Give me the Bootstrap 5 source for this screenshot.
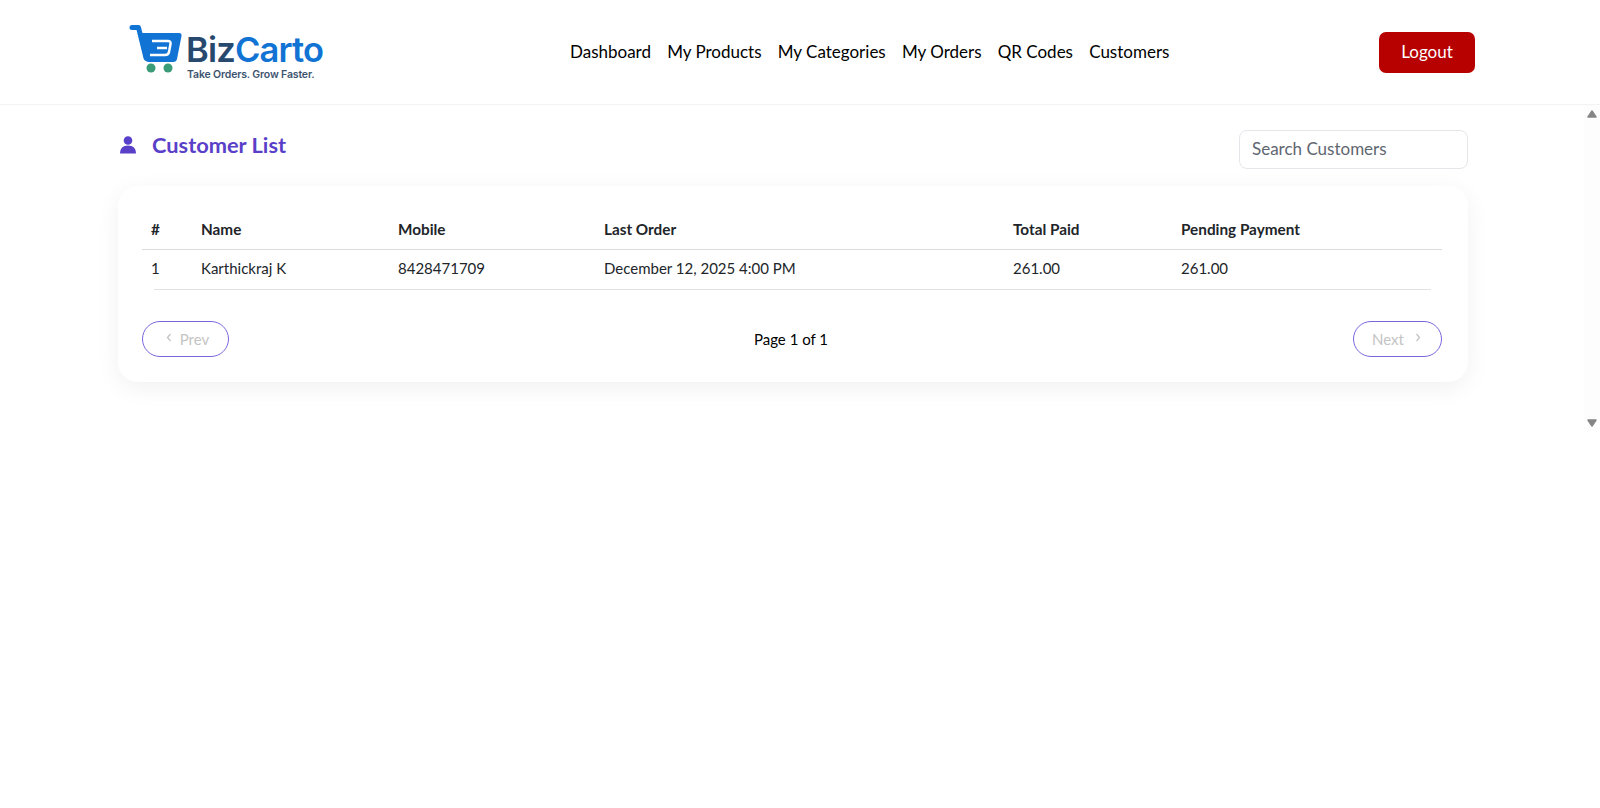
<!doctype html>
<html lang="en"><head><meta charset="utf-8">
<title>Customer List</title>
<link href="https://cdn.jsdelivr.net/npm/bootstrap@5.3.0/dist/css/bootstrap.min.css" rel="stylesheet">
<style>
html,body{height:100%;overflow:hidden}
body{font-family:Lato,"Noto Sans",sans-serif;color:#000;background:#fff}
.topbar{height:105px;border-bottom:1px solid #f3f3f3;padding:0 125px 0 128px}
.brand-box{width:212px;height:70px}
.brand-mark{margin-top:7px}
.brand-copy{margin:16px 0 0 2px}
.brand-name{font-family:Inter,sans-serif;font-weight:600;font-size:34.500px;line-height:33px;letter-spacing:-.8px;color:#27496d}
.brand-name span{color:#1174d4}
.brand-tag{font-family:Inter,sans-serif;font-size:10.500px;font-weight:600;line-height:12px;margin:3px 0 0 1px;color:#3d5470;letter-spacing:-.15px}
.menu-link{font-size:17px;color:#000;text-decoration:none}
.menu-row{gap:16.200px;margin-left:230px}
.btn-logout{background:#b70000;color:#fff;border:0;border-radius:7px;width:96px;height:41px;font-size:17px;padding:0}
.scroll-area{height:327px;padding:0 118px;position:relative}
.scroll-track{position:absolute;right:0;top:0;bottom:0;width:16px;background:#fdfdfd}
.scroll-arrow{position:absolute;left:3px;width:10px;height:8px}
.arrow-top{top:5px}
.arrow-bottom{bottom:5px}
.head-row{width:1350px;padding-top:25px;height:81px}
.page-title{font-size:21.800px;font-weight:700;color:#5a3fc8;margin:0;line-height:30px}
.title-wrap{padding-left:1px;gap:15px}
.search-box{width:229px;height:39px;border:1px solid #e4e6ea;border-radius:8px;font-size:17px;padding:0 12px 2px}
.search-box::placeholder{color:#5f6670;opacity:1}
.list-card{width:1350px;height:196px;background:#fff;border-radius:20px;box-shadow:0 6px 24px rgba(0,0,0,.06);padding:25px 26px 25px 24px}
.cust-table{width:100%;margin:0;font-size:15px;table-layout:fixed;--bs-table-bg:transparent}
.cust-table th{font-weight:700;font-size:15.300px;padding:0 8px 0 9px;height:38px;border-bottom:1px solid #dcdcdc;vertical-align:middle}
.cust-table td{padding:0 8px 2px 9px;height:40px;border:0;vertical-align:middle}
.row-rule{height:1px;background:#e2e2e2;margin:0 11px 0 12px}
.pager-row{margin-top:31px}
.pager-text{font-size:15px}
.pager-btn{height:36px;border:1px solid #7c64dd;border-radius:18px;background:#fff;color:#c4c4c4;font-size:15px;opacity:1}
.pager-prev{width:87px;padding:0 0 0 4px;gap:8px}
.pager-next{width:89px;padding:0 2px 0 0;gap:11px}
.chev{width:6px;height:9px;margin-top:-4px}
</style></head>
<body>
<header class="topbar d-flex align-items-center">
  <div class="brand-box d-flex align-items-start flex-shrink-0">
    <svg class="brand-mark flex-shrink-0" width="56" height="50" viewBox="0 0 56 50" aria-hidden="true">
      <path d="M4 3.500H10.500L18 34" fill="none" stroke="#1174d4" stroke-width="5" stroke-linecap="round" stroke-linejoin="round"/>
      <path d="M10 9H51Q54 9 53.500 12L49 35Q48.500 38 45 38H21Q17 38 16 34Z" fill="#1174d4"/>
      <path d="M24 17H40Q43 17 42.500 20L41 28Q40.500 31 37 31H22M29 24H39" fill="none" stroke="#fff" stroke-width="2.500"/>
      <circle cx="23" cy="44" r="4.500" fill="#3b9c78"/><circle cx="40" cy="44" r="4.500" fill="#3b9c78"/>
    </svg>
    <div class="brand-copy">
      <div class="brand-name">Biz<span>Carto</span></div>
      <div class="brand-tag">Take Orders. Grow Faster.</div>
    </div>
  </div>
  <nav class="menu-row d-flex">
    <a class="menu-link" href="#">Dashboard</a>
    <a class="menu-link" href="#">My Products</a>
    <a class="menu-link" href="#">My Categories</a>
    <a class="menu-link" href="#">My Orders</a>
    <a class="menu-link" href="#">QR Codes</a>
    <a class="menu-link" href="#">Customers</a>
  </nav>
  <button class="btn-logout ms-auto" type="button">Logout</button>
</header>
<main class="scroll-area">
  <div class="scroll-track">
    <svg class="scroll-arrow arrow-top" viewBox="0 0 10 8" aria-hidden="true"><path d="M5 1L9 7H1Z" fill="#858585" stroke="#858585" stroke-width="1.500" stroke-linejoin="round"/></svg>
    <svg class="scroll-arrow arrow-bottom" viewBox="0 0 10 8" aria-hidden="true"><path d="M1 1H9L5 7Z" fill="#858585" stroke="#858585" stroke-width="1.500" stroke-linejoin="round"/></svg>
  </div>
  <div class="head-row d-flex justify-content-between align-items-start">
    <div class="title-wrap d-flex align-items-center">
      <svg width="18" height="18" viewBox="0 0 18 18" aria-hidden="true"><circle cx="9" cy="4.500" r="4.300" fill="#5a3fc8"/><path d="M1 17.500Q1 9.500 9 9.500Q17 9.500 17 17.500Z" fill="#5a3fc8"/></svg>
      <h1 class="page-title">Customer List</h1>
    </div>
    <input class="search-box form-control" type="text" placeholder="Search Customers">
  </div>
  <section class="list-card">
    <table class="table cust-table">
      <colgroup><col style="width:50px"><col style="width:197px"><col style="width:206px"><col style="width:409px"><col style="width:168px"><col></colgroup>
      <thead><tr><th>#</th><th>Name</th><th>Mobile</th><th>Last Order</th><th>Total Paid</th><th>Pending Payment</th></tr></thead>
      <tbody><tr><td>1</td><td>Karthickraj K</td><td>8428471709</td><td>December 12, 2025 4:00 PM</td><td>261.00</td><td>261.00</td></tr></tbody>
    </table>
    <div class="row-rule"></div>
    <div class="pager-row d-flex justify-content-between align-items-center">
      <button class="pager-btn pager-prev d-flex align-items-center justify-content-center" type="button" disabled>
        <svg class="chev" viewBox="0 0 6 9" aria-hidden="true"><path d="M4.500 1L1.500 4.500L4.500 8" fill="none" stroke="#c4c4c4" stroke-width="1.300"/></svg>Prev</button>
      <span class="pager-text">Page 1 of 1</span>
      <button class="pager-btn pager-next d-flex align-items-center justify-content-center" type="button" disabled>Next
        <svg class="chev" viewBox="0 0 6 9" aria-hidden="true"><path d="M1.500 1L4.500 4.500L1.500 8" fill="none" stroke="#c4c4c4" stroke-width="1.300"/></svg></button>
    </div>
  </section>
</main>
<script src="https://cdn.jsdelivr.net/npm/bootstrap@5.3.0/dist/js/bootstrap.bundle.min.js"></script>
</body></html>
